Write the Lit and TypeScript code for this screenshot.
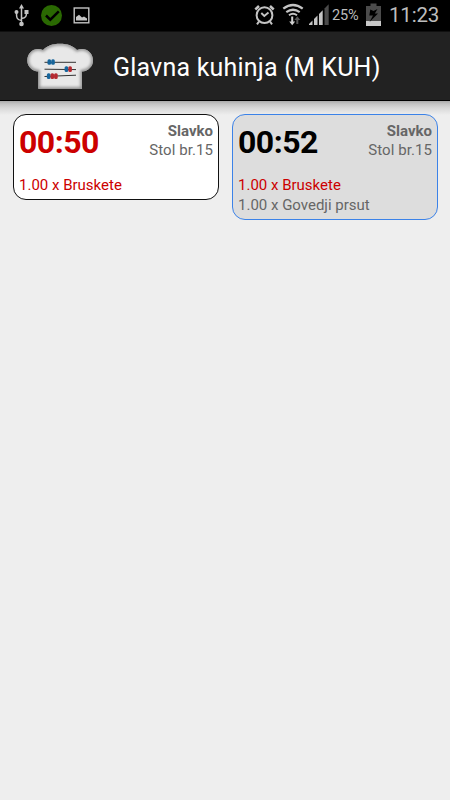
import { LitElement, html, css, svg } from "lit";
import { customElement, property } from "lit/decorators.js";
import { classMap } from "lit/directives/class-map.js";

interface OrderLine { text: string; late: boolean; }
interface Order { time: string; waiter: string; table: string; late: boolean; selected: boolean; lines: OrderLine[]; }

const ORDERS: Order[] = [
  { time: "00:50", waiter: "Slavko", table: "Stol br.15", late: true, selected: false,
    lines: [{ text: "1.00 x Bruskete", late: true }] },
  { time: "00:52", waiter: "Slavko", table: "Stol br.15", late: false, selected: true,
    lines: [{ text: "1.00 x Bruskete", late: true }, { text: "1.00 x Govedji prsut", late: false }] },
];

@customElement("status-bar")
class StatusBar extends LitElement {
  static styles = css`
    :host { display: flex; height: 31px; background: #000; color: #bdbdbd; font-family: Roboto, sans-serif; align-items: flex-start; }
    svg { display: block; flex: none; height: 31px; }
    .right { margin-left: auto; display: flex; }
    .percent { width: 34px; font-size: 14.5px; line-height: 32px; letter-spacing: -0.1px; white-space: nowrap; }
    .clock { width: 61px; padding-left: 1px; font-size: 20.5px; line-height: 31px; letter-spacing: -0.2px; white-space: nowrap; }
  `;
  render() {
    return html`
      <svg width="110" viewBox="0 0 110 31">
        <g fill="none" stroke="#c4c4c4" stroke-width="1.5">
          <path d="M21.500 7V23M21.500 20.500C16 20 16.500 16 16.500 12.500M21.500 18.500C26 18 26.500 16 26.500 12.500"/>
        </g>
        <g fill="#c4c4c4">
          <path d="M21.500 4L24 8.500H19Z"/><circle cx="21.500" cy="24" r="2.300"/>
          <circle cx="16.500" cy="12" r="2"/><rect x="24.500" y="10" width="4" height="4"/>
        </g>
        <circle cx="51.500" cy="15.500" r="10.500" fill="#2a6902"/>
        <path d="M46 15.500L50.300 19.700L58.800 11.300" fill="none" stroke="#000" stroke-width="2.500"/>
        <rect x="74.200" y="8" width="14.600" height="14.800" fill="none" stroke="#c4c4c4" stroke-width="1.400"/>
        <path d="M76 20.500V17L79 14.800L82 17.500L84 16.500L87 18.500V20.500Z" fill="#c4c4c4"/>
      </svg>
      <div class="right">
        <svg width="79" viewBox="253 0 79 31">
          <g fill="none" stroke="#c4c4c4" stroke-width="2">
            <circle cx="264.500" cy="15.200" r="7.900"/>
            <path d="M255.300 9.500L259 6M273.700 9.500L270 6" stroke-width="2.500"/>
            <path d="M259 21.500L257 24.300M270 21.500L272 24.300" stroke-width="2"/>
            <path d="M261.300 13L264.300 16L268.500 12.500" stroke-width="1.900"/>
            <path d="M283.300 8.700Q293 1.300 302.700 8.700" stroke-width="2.300"/>
            <path d="M286.300 12.200Q293 7.300 299.700 12.200" stroke-width="2.200"/>
            <path d="M289 15.300Q293 12.300 297 15.300" stroke-width="2"/>
          </g>
          <path d="M291.200 16.500H293.200V21.500H295.200L292.200 25.200L289.200 21.500H291.200Z" fill="#d0d0d0"/>
          <path d="M296.300 24V20H294.300L297.300 16.300L300.300 20H298.300V24Z" fill="#555"/>
          <g fill="#c4c4c4">
            <path d="M309 25V24L312.500 20.500V25Z"/>
            <path d="M314 25V19L317.500 15.500V25Z"/>
            <path d="M319 25V14L322.700 10.300V25Z"/>
          </g>
          <path d="M324.500 25V8.500L328.700 4.300V25Z" fill="#4b4b4b"/>
        </svg>
        <div class="percent">25%</div>
        <svg width="22" viewBox="366 0 22 31">
          <path d="M366 6H370.500V3.500H376.500V6H381V21H366Z" fill="#4b4b4b"/>
          <rect x="366" y="21" width="15" height="5" fill="#c8c8c8"/>
          <path d="M370.300 9.500L369.300 15.500H373L369.500 22L378 13.500H374.800L377.500 9L373.500 11Z" fill="#000"/>
        </svg>
        <div class="clock">11:23</div>
      </div>`;
  }
}

@customElement("title-bar")
class TitleBar extends LitElement {
  static styles = css`
    :host { display: flex; box-sizing: border-box; height: 70px; padding-left: 25px; background: #222; color: #fff;
      border-top: 1px solid #101010; border-bottom: 1px solid #000; font-family: Roboto, sans-serif; }
    svg { flex: none; display: block; }
    .title { margin: 0 0 0 17px; font-weight: 400; font-size: 25px; line-height: 71px; letter-spacing: 0.2px; white-space: nowrap; }
  `;
  bead(x: number, y: number, color: string) {
    return svg`<rect x=${x - 1.8} y=${y - 2.8} width="3.600" height="5.600" rx="1.500" fill=${color}/>`;
  }
  render() {
    const hat = "M38.300 88.700V71.500C32 71 27.300 66.500 27.300 60.500C27.300 51.500 35.500 46.500 43 50C47 45.800 52.500 43.800 60 43.800C67.500 43.800 73 45.800 77 50C84.500 46.500 93 51.500 93 60.500C93 66.500 88.300 71 82 71.500V88.700Z";
    const blue = "#17659b", red = "#b52a31";
    return html`
      <svg width="71" height="68" viewBox="25 32 71 68">
        <defs>
          <clipPath id="hat"><path d=${hat}/></clipPath>
          <filter id="soft" x="-10%" y="-10%" width="120%" height="120%"><feGaussianBlur stdDeviation="1.600"/></filter>
        </defs>
        <path d=${hat} fill="#e8e8e8"/>
        <g clip-path="url(#hat)"><path d=${hat} fill="none" stroke="#888" stroke-width="3" filter="url(#soft)"/></g>
        <path d="M44.500 62.300H76M44.500 69.200L76 69.600M44.500 76.500L76 75.200" stroke="#333" stroke-width="1" fill="none"/>
        ${this.bead(49.3, 62, blue)}${this.bead(53, 62, blue)}
        ${this.bead(66.4, 69.1, blue)}${this.bead(70.1, 69.1, red)}
        ${this.bead(48.7, 76.1, blue)}${this.bead(52.3, 76.1, red)}${this.bead(55.9, 76.1, red)}
      </svg>
      <h1 class="title">Glavna kuhinja (M KUH)</h1>`;
  }
}

@customElement("order-card")
class OrderCard extends LitElement {
  @property({ attribute: false }) order!: Order;
  static styles = css`
    :host { display: block; font-family: Roboto, sans-serif; }
    .card { box-sizing: border-box; border: 1px solid #111; border-radius: 13px; background: #fff; color: #666; padding: 7px 5px 4px; }
    .selected { border-color: #3b82e8; background: #ddd; }
    .head { display: flex; justify-content: space-between; height: 53px; }
    .time { font-size: 32px; line-height: 41px; font-weight: 700; letter-spacing: -0.5px; color: #000; white-space: nowrap; }
    .meta { text-align: right; font-size: 15px; line-height: 19px; white-space: nowrap; }
    .table { letter-spacing: 0.08px; }
    .waiter { font-weight: 700; }
    .line { font-size: 15px; line-height: 20px; white-space: nowrap; }
    .late { color: #c00; }
  `;
  render() {
    const o = this.order;
    return html`<div class=${classMap({ card: true, selected: o.selected })}>
      <div class="head">
        <div class=${classMap({ time: true, late: o.late })}>${o.time}</div>
        <div class="meta"><div class="waiter">${o.waiter}</div><div class="table">${o.table}</div></div>
      </div>
      ${o.lines.map((l) => html`<div class=${classMap({ line: true, late: l.late })}>${l.text}</div>`)}
    </div>`;
  }
}

@customElement("app-root")
class AppRoot extends LitElement {
  static styles = css`
    :host { display: block; height: 800px; background: #eee; overflow: hidden; }
    .orders { display: grid; grid-template-columns: 206px 206px; column-gap: 13px; align-items: start; padding: 13px 12px 0 13px;
      background: linear-gradient(#aaa 0, #c4c4c4 3px, #d8d8d8 7px, #eee 14px); }
  `;
  render() {
    return html`<status-bar></status-bar><title-bar></title-bar>
      <main class="orders">${ORDERS.map((o) => html`<order-card .order=${o}></order-card>`)}</main>`;
  }
}
